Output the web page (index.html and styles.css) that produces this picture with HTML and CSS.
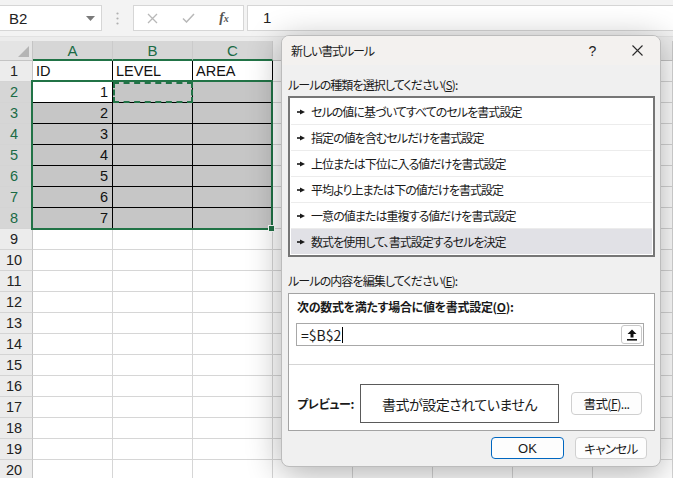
FILE: index.html
```html
<!DOCTYPE html>
<html lang="ja">
<head>
<meta charset="utf-8">
<title>新しい書式ルール</title>
<link rel="stylesheet" href="styles.css">
</head>
<body>
<div class="app">
  <div class="fbar">
    <div class="namebox"><span>B2</span><svg class="dd" width="9" height="5" viewBox="0 0 9 5"><polygon points="0,0 9,0 4.5,5" fill="#7a7a7a"/></svg></div>
    <div class="grip"><svg width="3" height="13" viewBox="0 0 3 13"><circle cx="1.5" cy="1.5" r="1.1" fill="#b0b0b0"/><circle cx="1.5" cy="6.5" r="1.1" fill="#b0b0b0"/><circle cx="1.5" cy="11.5" r="1.1" fill="#b0b0b0"/></svg></div>
    <div class="fbtns">
      <span class="fb"><svg width="11" height="11" viewBox="0 0 11 11"><path d="M1 1L10 10M10 1L1 10" stroke="#b8b8b8" stroke-width="1.3"/></svg></span>
      <span class="fb"><svg width="13" height="10" viewBox="0 0 13 10"><path d="M1 5.5L4.5 9L12 1" stroke="#b8b8b8" stroke-width="1.5" fill="none"/></svg></span>
      <span class="fb fx">f<small>x</small></span>
    </div>
    <div class="finput">1</div>
  </div>

  <div class="sheet">
    <div class="corner"><svg width="11" height="11" viewBox="0 0 11 11"><polygon points="11,0 11,11 0,11" fill="#b5b5b5"/></svg></div>
    <div class="h sel">A</div><div class="h sel">B</div><div class="h sel">C</div><div class="h"></div><div class="h"></div><div class="h"></div><div class="h"></div><div class="h"></div>

    <div class="rh">1</div><div class="c t">ID</div><div class="c t">LEVEL</div><div class="c t">AREA</div><div class="c"></div><div class="c"></div><div class="c"></div><div class="c"></div><div class="c"></div>
    <div class="rh sel">2</div><div class="c t num">1</div><div class="c t g ants"></div><div class="c t g"></div><div class="c"></div><div class="c"></div><div class="c"></div><div class="c"></div><div class="c"></div>
    <div class="rh sel">3</div><div class="c t g num">2</div><div class="c t g"></div><div class="c t g"></div><div class="c"></div><div class="c"></div><div class="c"></div><div class="c"></div><div class="c"></div>
    <div class="rh sel">4</div><div class="c t g num">3</div><div class="c t g"></div><div class="c t g"></div><div class="c"></div><div class="c"></div><div class="c"></div><div class="c"></div><div class="c"></div>
    <div class="rh sel">5</div><div class="c t g num">4</div><div class="c t g"></div><div class="c t g"></div><div class="c"></div><div class="c"></div><div class="c"></div><div class="c"></div><div class="c"></div>
    <div class="rh sel">6</div><div class="c t g num">5</div><div class="c t g"></div><div class="c t g"></div><div class="c"></div><div class="c"></div><div class="c"></div><div class="c"></div><div class="c"></div>
    <div class="rh sel">7</div><div class="c t g num">6</div><div class="c t g"></div><div class="c t g"></div><div class="c"></div><div class="c"></div><div class="c"></div><div class="c"></div><div class="c"></div>
    <div class="rh sel">8</div><div class="c t g num">7</div><div class="c t g"></div><div class="c t g"></div><div class="c"></div><div class="c"></div><div class="c"></div><div class="c"></div><div class="c"></div>
    <div class="rh">9</div><div class="c"></div><div class="c"></div><div class="c"></div><div class="c"></div><div class="c"></div><div class="c"></div><div class="c"></div><div class="c"></div>
    <div class="rh">10</div><div class="c"></div><div class="c"></div><div class="c"></div><div class="c"></div><div class="c"></div><div class="c"></div><div class="c"></div><div class="c"></div>
    <div class="rh">11</div><div class="c"></div><div class="c"></div><div class="c"></div><div class="c"></div><div class="c"></div><div class="c"></div><div class="c"></div><div class="c"></div>
    <div class="rh">12</div><div class="c"></div><div class="c"></div><div class="c"></div><div class="c"></div><div class="c"></div><div class="c"></div><div class="c"></div><div class="c"></div>
    <div class="rh">13</div><div class="c"></div><div class="c"></div><div class="c"></div><div class="c"></div><div class="c"></div><div class="c"></div><div class="c"></div><div class="c"></div>
    <div class="rh">14</div><div class="c"></div><div class="c"></div><div class="c"></div><div class="c"></div><div class="c"></div><div class="c"></div><div class="c"></div><div class="c"></div>
    <div class="rh">15</div><div class="c"></div><div class="c"></div><div class="c"></div><div class="c"></div><div class="c"></div><div class="c"></div><div class="c"></div><div class="c"></div>
    <div class="rh">16</div><div class="c"></div><div class="c"></div><div class="c"></div><div class="c"></div><div class="c"></div><div class="c"></div><div class="c"></div><div class="c"></div>
    <div class="rh">17</div><div class="c"></div><div class="c"></div><div class="c"></div><div class="c"></div><div class="c"></div><div class="c"></div><div class="c"></div><div class="c"></div>
    <div class="rh">18</div><div class="c"></div><div class="c"></div><div class="c"></div><div class="c"></div><div class="c"></div><div class="c"></div><div class="c"></div><div class="c"></div>
    <div class="rh">19</div><div class="c"></div><div class="c"></div><div class="c"></div><div class="c"></div><div class="c"></div><div class="c"></div><div class="c"></div><div class="c"></div>
    <div class="rh">20</div><div class="c"></div><div class="c"></div><div class="c"></div><div class="c"></div><div class="c"></div><div class="c"></div><div class="c"></div><div class="c"></div>

    <div class="selection"></div>
    <div class="handle"></div>
  </div>

  <div class="dialog">
    <div class="dtitle">
      <span class="tt">新しい書式ルール</span>
      <span class="help">?</span>
      <span class="close"><svg width="11" height="11" viewBox="0 0 11 11"><path d="M0.5 0.5L10.5 10.5M10.5 0.5L0.5 10.5" stroke="#2b2b2b" stroke-width="1.1"/></svg></span>
    </div>
    <div class="dbody">
      <div class="lbl">ルールの種類を選択してください(<u>S</u>):</div>
      <div class="list">
        <div class="item"><svg class="arr" width="8" height="6" viewBox="0 0 8 6"><rect x="0" y="2.2" width="4" height="1.6" fill="#1a1a1a"/><polygon points="3,0.5 8,3 3,5.5" fill="#1a1a1a"/></svg><span>セルの値に基づいてすべてのセルを書式設定</span></div>
        <div class="item"><svg class="arr" width="8" height="6" viewBox="0 0 8 6"><rect x="0" y="2.2" width="4" height="1.6" fill="#1a1a1a"/><polygon points="3,0.5 8,3 3,5.5" fill="#1a1a1a"/></svg><span>指定の値を含むセルだけを書式設定</span></div>
        <div class="item"><svg class="arr" width="8" height="6" viewBox="0 0 8 6"><rect x="0" y="2.2" width="4" height="1.6" fill="#1a1a1a"/><polygon points="3,0.5 8,3 3,5.5" fill="#1a1a1a"/></svg><span>上位または下位に入る値だけを書式設定</span></div>
        <div class="item"><svg class="arr" width="8" height="6" viewBox="0 0 8 6"><rect x="0" y="2.2" width="4" height="1.6" fill="#1a1a1a"/><polygon points="3,0.5 8,3 3,5.5" fill="#1a1a1a"/></svg><span>平均より上または下の値だけを書式設定</span></div>
        <div class="item"><svg class="arr" width="8" height="6" viewBox="0 0 8 6"><rect x="0" y="2.2" width="4" height="1.6" fill="#1a1a1a"/><polygon points="3,0.5 8,3 3,5.5" fill="#1a1a1a"/></svg><span>一意の値または重複する値だけを書式設定</span></div>
        <div class="item cur"><svg class="arr" width="8" height="6" viewBox="0 0 8 6"><rect x="0" y="2.2" width="4" height="1.6" fill="#1a1a1a"/><polygon points="3,0.5 8,3 3,5.5" fill="#1a1a1a"/></svg><span>数式を使用して、書式設定するセルを決定</span></div>
      </div>
      <div class="lbl lbl2">ルールの内容を編集してください(<u>E</u>):</div>
      <div class="edit">
        <div class="elbl">次の数式を満たす場合に値を書式設定(<u>O</u>):</div>
        <div class="formula"><span class="ftext">=$B$2</span><span class="caret"></span>
          <span class="upbtn"><svg width="10" height="12" viewBox="0 0 10 12"><polygon points="5,0.5 9.5,5 6.5,5 6.5,8.5 3.5,8.5 3.5,5 0.5,5" fill="#111"/><rect x="0" y="10" width="10" height="1.6" fill="#111"/></svg></span>
        </div>
        <div class="sep"></div>
        <div class="prow">
          <span class="plbl">プレビュー:</span>
          <div class="pbox">書式が設定されていません</div>
          <span class="fbtn">書式(<u>F</u>)...</span>
        </div>
      </div>
      <div class="btns">
        <span class="btn ok">OK</span>
        <span class="btn cancel">キャンセル</span>
      </div>
    </div>
  </div>
</div>
</body>
</html>
```

FILE: styles.css
```css
* { box-sizing: border-box; }
html, body { margin: 0; padding: 0; }
body {
  width: 673px;
  height: 478px;
  overflow: hidden;
  background: #fff;
  font-family: "Liberation Sans", Arial, sans-serif;
}
.app {
  position: relative;
  width: 673px;
  height: 478px;
  overflow: hidden;
  background: #ececec;
}

/* formula bar */
.fbar {
  height: 37px;
  display: flex;
  align-items: flex-start;
  padding-top: 5px;
  background: #f3f3f3;
  border-bottom: 1px solid #e2e2e2;
}
.namebox {
  width: 103px;
  height: 26px;
  margin-left: -1px;
  background: #fff;
  border: 1px solid #d6d6d6;
  display: flex;
  align-items: center;
  justify-content: space-between;
  padding: 0 6px 0 9px;
  font-size: 15px;
  color: #222;
}
.grip {
  width: 31px;
  height: 26px;
  display: flex;
  align-items: center;
  justify-content: center;
}
.fbtns {
  width: 111px;
  height: 26px;
  background: #fff;
  border: 1px solid #d6d6d6;
  display: flex;
  align-items: center;
}
.fb {
  width: 36px;
  height: 24px;
  display: flex;
  align-items: center;
  justify-content: center;
}
.fx {
  font-family: "Liberation Serif", serif;
  font-style: italic;
  font-size: 14px;
  color: #555;
  font-weight: bold;
}
.fx small { font-size: 10px; }
.finput {
  flex: 1;
  height: 26px;
  margin-left: 3px;
  margin-right: -2px;
  background: #fff;
  border: 1px solid #d6d6d6;
  padding-left: 15px;
  font-size: 15px;
  line-height: 24px;
  color: #222;
}

/* sheet grid */
.sheet {
  position: relative;
  margin-top: 4px;
  display: grid;
  grid-template-columns: 33px repeat(8, 80px);
  grid-template-rows: 20px repeat(20, 21px);
}
.corner {
  background: #e4e4e4;
  border-right: 1px solid #c4c4c4;
  border-bottom: 1px solid #c4c4c4;
  display: flex;
  align-items: flex-end;
  justify-content: flex-end;
  padding: 0 3px 3px 0;
}
.h {
  background: #ececec;
  border-right: 1px solid #cbcbcb;
  border-bottom: 1px solid #c4c4c4;
  text-align: center;
  font-size: 15px;
  line-height: 19px;
  color: #333;
}
.h.sel {
  background: #d6d6d6;
  color: #1a6b45;
  border-bottom: 2px solid #217346;
}
.rh {
  background: #ececec;
  border-right: 1px solid #c4c4c4;
  border-bottom: 1px solid #d4d4d4;
  text-align: center;
  padding-right: 4px;
  font-size: 14.5px;
  line-height: 21px;
  color: #222;
}
.rh.sel {
  background: #d6d6d6;
  color: #1a6b45;
}
.c {
  background: #fff;
  border-right: 1px solid #d6d6d6;
  border-bottom: 1px solid #d6d6d6;
  font-size: 14.5px;
  line-height: 21px;
  padding: 0 4px 0 3px;
  white-space: nowrap;
  overflow: hidden;
  color: #111;
}
.c.t { border-right-color: #000; border-bottom-color: #000; }
.c.g { background: #c6c6c6; }
.c.num { text-align: right; }
.c.ants {
  outline: 2px dashed #217346;
  outline-offset: -2px;
}
.selection {
  position: absolute;
  left: 31px;
  top: 39px;
  width: 242px;
  height: 150px;
  border: 2px solid #217346;
  pointer-events: none;
}
.handle {
  position: absolute;
  left: 268px;
  top: 184px;
  width: 7px;
  height: 7px;
  background: #217346;
  border: 1px solid #fff;
}

/* dialog */
.dialog {
  position: absolute;
  left: 281px;
  top: 35px;
  width: 380px;
  height: 432px;
  background: #f0f0f0;
  border: 1px solid #bcbcbc;
  border-radius: 8px;
  box-shadow: 0 6px 34px rgba(0, 0, 0, 0.32);
  font-family: "Noto Sans CJK JP", "Noto Sans", sans-serif;
  font-feature-settings: "palt";
  font-size: 12px;
  letter-spacing: -0.6px;
  color: #1a1a1a;
  overflow: hidden;
  display: flex;
  flex-direction: column;
}
.dtitle {
  height: 29px;
  flex: none;
  background: #f3f1ef;
  display: flex;
  align-items: center;
  padding-left: 9px;
  font-size: 12px;
}
.tt { flex: 1; letter-spacing: -1.1px; }
.help {
  width: 44px;
  text-align: center;
  font-family: "Liberation Sans", sans-serif;
  font-size: 14px;
  color: #222;
}
.close {
  width: 46px;
  display: flex;
  justify-content: center;
}
.dbody {
  flex: 1;
  display: flex;
  flex-direction: column;
  padding: 0 5px 0 6px;
}
.lbl {
  margin-top: 11px;
  height: 18px;
  line-height: 18px;
  letter-spacing: -0.9px;
}
.lbl2 { margin-top: 15px; }
.list {
  margin-top: 2px;
  height: 161px;
  border: 2px solid #767676;
  background: #fff;
  padding: 1px;
}
.item {
  height: 26px;
  border-bottom: 1px solid #ececec;
  display: flex;
  align-items: center;
  gap: 6px;
  padding-left: 6px;
  font-size: 12px;
  letter-spacing: -0.95px;
}
.item.cur {
  height: 25px;
  border-bottom: none;
  background: #e1e1e6;
}
.arr { flex: none; }
.edit {
  margin-top: 3px;
  height: 138px;
  border: 1px solid #a3a3a3;
  background: #fff;
  display: flex;
  flex-direction: column;
}
.elbl {
  margin: 4px 0 0 8px;
  line-height: 18px;
  font-weight: bold;
  letter-spacing: -0.3px;
}
.formula {
  margin: 7px 10px 0 7px;
  height: 23px;
  border: 1px solid #a8a8a8;
  display: flex;
  align-items: center;
  padding-left: 4px;
}
.ftext { font-size: 14px; letter-spacing: 0; }
.caret {
  width: 1px;
  height: 16px;
  background: #000;
  margin-left: 1px;
}
.upbtn {
  margin-left: auto;
  margin-right: 1px;
  width: 21px;
  height: 19px;
  border: 1px solid #c8c8c8;
  border-radius: 3px;
  background: #fff;
  display: flex;
  align-items: center;
  justify-content: center;
}
.sep {
  margin-top: 18px;
  border-top: 1px solid #d5d5d5;
}
.prow {
  margin-top: 19px;
  display: flex;
  align-items: center;
  padding-left: 8px;
}
.plbl {
  width: 63px;
  flex: none;
  white-space: nowrap;
  font-weight: bold;
  letter-spacing: -0.3px;
}
.pbox {
  width: 199px;
  height: 39px;
  flex: none;
  border: 1px solid #5a5a5a;
  display: flex;
  align-items: center;
  justify-content: center;
  font-size: 14px;
  letter-spacing: -0.5px;
}
.fbtn {
  margin-left: 12px;
  width: 71px;
  height: 23px;
  flex: none;
  border: 1px solid #cfcfcf;
  border-radius: 4px;
  background: #fdfdfd;
  display: flex;
  align-items: center;
  justify-content: center;
  font-size: 12.5px;
}
.btns {
  margin-top: 6px;
  display: flex;
  justify-content: flex-end;
  gap: 11px;
  padding-right: 8px;
}
.btn {
  width: 72px;
  height: 22px;
  border: 1px solid #d0d0d0;
  border-radius: 4px;
  background: #fdfdfd;
  display: flex;
  align-items: center;
  justify-content: center;
  font-size: 12.5px;
}
.btn.ok {
  width: 73px;
  border-color: #0067c0;
  font-family: "Liberation Sans", sans-serif;
  font-size: 13px;
  letter-spacing: 0;
}
```
